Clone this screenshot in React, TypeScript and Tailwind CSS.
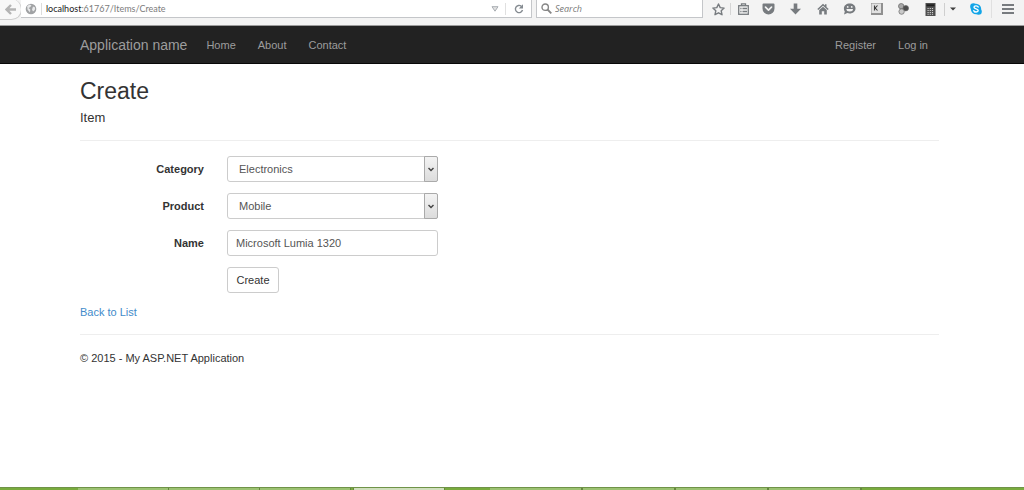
import { useState } from "react";
import type { ReactNode } from "react";
import { clsx } from "clsx";

const navLinks = ["Home", "About", "Contact"];
const accountLinks = ["Register", "Log in"];

const fields = [
  { id: "category", label: "Category", options: ["Electronics", "Furniture"] },
  { id: "product", label: "Product", options: ["Mobile", "Laptop"] },
];

const tools: { label: string; icon: ReactNode }[] = [
  {
    label: "Reading list",
    icon: (
      <svg width="11" height="12" viewBox="0 0 11 12" fill="none" stroke="#777b7f" strokeWidth="1.3">
        <rect x="0.7" y="2.7" width="9.6" height="8.6" />
        <path d="M3.500 2.500V.8h4v1.700M2.300 5.500h1.200M4.500 5.500h4.500M2.300 8.500h1.200M4.500 8.500h4.500" />
      </svg>
    ),
  },
  {
    label: "Pocket",
    icon: (
      <svg width="13" height="12" viewBox="0 0 13 12">
        <path d="M1.5 0.5h10q1 0 1 1v4a6 6 0 0 1-12 0v-4q0-1 1-1z" fill="#777b7f" />
        <path d="M3.5 4.2l3 2.9 3-2.9" fill="none" stroke="#f3f3f3" strokeWidth="1.7" strokeLinecap="round" strokeLinejoin="round" />
      </svg>
    ),
  },
  {
    label: "Downloads",
    icon: (
      <svg width="11" height="12" viewBox="0 0 11 12">
        <path d="M3.7 0.5h3.6v5.2H11L5.5 11.5 0 5.7h3.7z" fill="#777b7f" />
      </svg>
    ),
  },
  {
    label: "Home page",
    icon: (
      <svg width="12" height="12" viewBox="0 0 12 12" fill="#777b7f">
        <path d="M6 0.7L0.3 6l1 .9L6 2.7l4.7 4.2 1-.9-2.2-2V1.2H8v1.4z" />
        <path d="M6 3.7L2.2 7v4.5h2.6V8.3h2.4v3.2h2.6V7z" />
      </svg>
    ),
  },
  {
    label: "Hello",
    icon: (
      <svg width="13" height="12" viewBox="0 0 13 12">
        <path d="M6.7 0.5c3.3 0 5.8 2.1 5.8 4.9s-2.5 5-5.8 5c-.9 0-1.7-.1-2.4-.4L1 11.5l.8-3C1.200 7.600.9 6.600.9 5.400.9 2.600 3.400.5 6.700.5z" fill="#777b7f" />
        <circle cx="4.7" cy="3.9" r=".9" fill="#f3f3f3" />
        <circle cx="8.7" cy="3.9" r=".9" fill="#f3f3f3" />
        <path d="M3.400 6.100h6.600a3.300 2.500 0 0 1-6.600 0z" fill="#f3f3f3" />
      </svg>
    ),
  },
  {
    label: "Keyboard",
    icon: (
      <svg width="12" height="12" viewBox="0 0 12 12">
        <rect width="12" height="12" fill="#909090" />
        <rect x="0.5" y="0.5" width="9.5" height="9.5" fill="#e0e0e0" />
        <path d="M3.500 2.500v5M6.500 2.500L4.200 5l2.300 2.500" fill="none" stroke="#3a3a3a" strokeWidth="1.100" />
      </svg>
    ),
  },
  {
    label: "Colors",
    icon: (
      <svg width="11" height="12" viewBox="0 0 11 12" stroke="#666" strokeWidth="0.7">
        <circle cx="3.2" cy="3.2" r="2.7" fill="#a8a8a8" />
        <circle cx="7.8" cy="5.2" r="2.7" fill="#4e4e4e" />
        <circle cx="3.6" cy="8.6" r="2.7" fill="#c9c9c9" />
      </svg>
    ),
  },
];

function Toolbar() {
  return (
    <div className="flex h-[26px] items-start border-b border-[#9c9c9c] bg-[#f3f3f3] font-['Open_Sans','Noto_Sans',sans-serif]">
      <button aria-label="Back" className="-mt-px -mr-px flex h-[21px] w-[22px] items-center justify-center rounded-r-full border-r border-b border-[#cfcfcf] bg-[#f8f8f8]">
        <svg width="11" height="11" viewBox="0 0 11 11" fill="none" stroke="#b4b4b4" strokeWidth="2.4">
          <path d="M6 1L1.5 5.500 6 10M1.500 5.500H11" />
        </svg>
      </button>
      <div className="flex h-[18px] flex-1 items-center border-r border-b border-[#c4c6c9] bg-white">
        <svg className="ml-1 shrink-0" width="12" height="12" viewBox="0 0 12 12">
          <circle cx="6" cy="6" r="5.3" fill="#a0a2a4" />
          <path d="M2.200 3l2.500-1.500 1.800 1L5 4.300 3.500 5l1.800 1.500L5 9.500 2.500 6.500zM8 3.500l2.200 1-.4 2.500-1.800 1.500L7 6.500z" fill="#e9eaeb" />
        </svg>
        <span className="ml-1 h-3 w-px bg-[#dcdcdc]" />
        <span className="ml-1 flex-1 font-[Lato,'Open_Sans',sans-serif] text-[9px] text-[#7c7c7c]">
          <span className="text-[#1a1a1a]">localhost</span>:61767/Items/Create
        </span>
        <button aria-label="Show history" className="flex h-full w-[21px] items-center justify-center">
          <svg width="8" height="6" viewBox="0 0 8 6">
            <path d="M1 .7h6L4 5.200z" fill="#e3e3e3" stroke="#a8adb2" />
          </svg>
        </button>
        <button aria-label="Reload" className="flex h-3 w-[26px] items-center justify-center border-l border-[#e0e0e0]">
          <svg width="10" height="10" viewBox="0 0 10 10">
            <path d="M7.300 2.200A3.600 3.600 0 1 0 8.500 6" fill="none" stroke="#858b91" strokeWidth="1.400" />
            <path d="M9 .3V4.500H4.800z" fill="#858b91" />
          </svg>
        </button>
      </div>
      <label className="ml-1 flex h-[18px] w-[167px] items-center border-x border-b border-[#c4c6c9] bg-white">
        <svg className="ml-1 shrink-0" width="11" height="11" viewBox="0 0 11 11" fill="none" stroke="#868686" strokeWidth="1.4">
          <circle cx="4.2" cy="4.2" r="3.2" />
          <path d="M6.500 6.500L10.300 10.300" strokeWidth="1.800" />
        </svg>
        <input aria-label="Search" placeholder="Search" className="ml-[3px] w-full text-[9px] outline-none placeholder:text-[#777] placeholder:italic" />
      </label>
      <div className="flex h-[18px] items-center">
        <button aria-label="Bookmark" className="ml-1 flex h-3 w-6 items-center justify-center border-r border-[#d5d5d5]">
          <svg className="shrink-0" width="13" height="13" viewBox="0 0 13 13" fill="none" stroke="#777b7f" strokeWidth="1.400" strokeLinejoin="round">
            <path d="M6.500 1l1.700 3.600 3.900.5-2.900 2.700.8 3.900-3.500-1.900L3 11.700l.8-3.900L.9 5.100l3.900-.5z" />
          </svg>
        </button>
        {tools.map((tool, i) => (
          <button key={tool.label} aria-label={tool.label} className={clsx("flex items-center justify-center", i === 0 ? "w-6" : "w-[27px]")}>
            {tool.icon}
          </button>
        ))}
        <button aria-label="Calculator" className="flex h-[13px] w-7 items-center justify-center border-r border-[#cfcfcf]">
          <svg width="11" height="13" viewBox="0 0 11 13">
            <rect x="0.5" width="10" height="13" fill="#4f4f4f" />
            <path d="M1.500 2.300h8" stroke="#1f1f1f" strokeWidth="2" />
            <path d="M2.500 5.500h6M2.500 7.500h6M2.500 9.500h6M2.500 11.300h6" stroke="#d0d0d0" strokeDasharray="1.200 1" />
          </svg>
        </button>
        <button aria-label="Calculator options" className="flex w-4 items-center justify-center">
          <svg width="6" height="4" viewBox="0 0 6 4">
            <path d="M0 .5h6L3 3.500z" fill="#3d3d3d" />
          </svg>
        </button>
        <button aria-label="Skype" className="flex h-[18px] w-[31px] items-center justify-center border-r border-[#e0e0e0]">
          <svg width="12" height="12" viewBox="0 0 12 12">
            <circle cx="3.4" cy="3.4" r="3.2" fill="#12a5e8" />
            <circle cx="8.6" cy="8.6" r="3.2" fill="#12a5e8" />
            <circle cx="6" cy="6" r="5.2" fill="#12a5e8" />
            <path d="M8.200 4.100C7.600 2.400 4 2.500 4 4.300c0 2 4.200 1.300 4.200 3.300 0 1.900-3.900 1.900-4.400.1" fill="none" stroke="#fff" strokeWidth="1.400" strokeLinecap="round" />
          </svg>
        </button>
        <button aria-label="Open menu" className="flex w-8 items-center justify-center">
          <svg width="12" height="10" viewBox="0 0 12 10">
            <path d="M0 1h12M0 5h12M0 9h12" stroke="#777b7f" strokeWidth="2" />
          </svg>
        </button>
      </div>
    </div>
  );
}

function Navbar() {
  return (
    <nav className="flex h-[38px] items-center border-b border-[#080808] bg-[#222] pr-[85px] pl-20 text-[11px] text-[#9d9d9d]">
      <a href="#" className="text-[14px]">Application name</a>
      <div className="ml-2 flex flex-1">
        {navLinks.map((link) => (
          <a key={link} href="#" className="px-[11px]">{link}</a>
        ))}
      </div>
      {accountLinks.map((link) => (
        <a key={link} href="#" className="px-[11px]">{link}</a>
      ))}
    </nav>
  );
}

function SelectField({ id, label, options }: (typeof fields)[number]) {
  const [value, setValue] = useState(options[0]);

  return (
    <div className="flex items-center">
      <label htmlFor={id} className="w-[124px] text-right font-bold">{label}</label>
      <div className="relative ml-[23px] w-[211px]">
        <select
          id={id}
          value={value}
          onChange={(e) => setValue(e.target.value)}
          className="block h-[26px] w-full appearance-none rounded-[3px] border border-[#ccc] bg-white pr-5 pl-[11px] text-[#555]"
        >
          {options.map((option) => (
            <option key={option}>{option}</option>
          ))}
        </select>
        <span className="pointer-events-none absolute inset-y-0 right-0 flex w-[14px] items-center justify-center rounded-r-[2px] border border-[#aaa] bg-gradient-to-b from-[#f3f3f3] to-[#dcdcdc]">
          <svg width="6" height="5" viewBox="0 0 6 5" fill="none" stroke="#444" strokeWidth="1.4">
            <path d="M.5 1L3 3.600 5.500 1" />
          </svg>
        </span>
      </div>
    </div>
  );
}

function Taskbar() {
  const windowClass = "w-[91px] border-r border-[#66873f] bg-[#9cc272]";

  return (
    <div className="mt-auto flex h-[3px] border-t border-[#6f9348] bg-[#79ab3e] pl-[78px]">
      <div className={windowClass} />
      <div className={windowClass} />
      <div className={windowClass} />
      <div className="ml-[2px] w-[92px] border-x border-[#66873f] bg-[#d0dfbd]" />
      <div className="ml-[45px] flex">
        {[0, 1, 2, 3].map((i) => (
          <div key={i} className="w-[93px] border-r-2 border-[#66873f] bg-[#9cc272]" />
        ))}
      </div>
    </div>
  );
}

export default function App() {
  const [name, setName] = useState("Microsoft Lumia 1320");

  return (
    <div className="flex min-h-screen flex-col bg-white font-['Liberation_Sans',Arial,sans-serif] text-[11px] leading-4 text-[#333]">
      <Toolbar />
      <Navbar />
      <main className="pt-[14px] pr-[85px] pl-20">
        <h2 className="text-[23px] leading-[26px]">Create</h2>
        <form onSubmit={(e) => e.preventDefault()}>
          <h4 className="mt-1.5 text-[13px]">Item</h4>
          <hr className="mt-[14px] mb-[15px] border-[#eee]" />
          <div className="flex flex-col gap-[11px]">
            {fields.map((field) => (
              <SelectField key={field.id} {...field} />
            ))}
            <div className="flex items-center">
              <label htmlFor="name" className="w-[124px] text-right font-bold">Name</label>
              <input
                id="name"
                value={name}
                onChange={(e) => setName(e.target.value)}
                className="ml-[23px] h-[26px] w-[211px] rounded-[3px] border border-[#ccc] px-2 text-[#555]"
              />
            </div>
            <button type="submit" className="ml-[147px] h-[26px] w-[52px] rounded-[3px] border border-[#ccc] bg-white">
              Create
            </button>
          </div>
        </form>
        <a href="#" className="mt-[11px] inline-block text-[#428bca]">Back to List</a>
        <hr className="mt-[14px] mb-[15px] border-[#eee]" />
        <footer>&copy; 2015 - My ASP.NET Application</footer>
      </main>
      <Taskbar />
    </div>
  );
}
